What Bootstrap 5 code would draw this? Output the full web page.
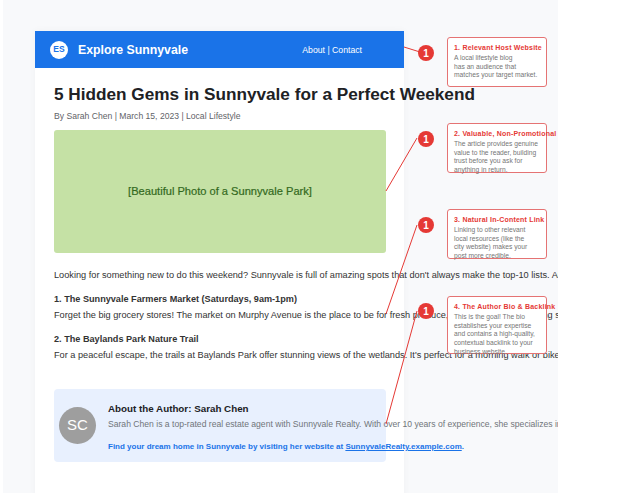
<!DOCTYPE html>
<html lang="en">
<head>
  <meta charset="UTF-8" />
  <meta name="viewport" content="width=device-width, initial-scale=1" />
  <title>Explore Sunnyvale</title>
  <link href="https://cdn.jsdelivr.net/npm/bootstrap@5.3.3/dist/css/bootstrap.min.css" rel="stylesheet" />
  <style>
    html, body {
      height: 100%;
      background-color: #fff;
    }
    body {
      overflow: hidden;
      font-family: "Liberation Sans", Arial, sans-serif;
    }
    .canvas-area {
      position: relative;
      width: 555px;
      height: 493px;
      margin-left: 3px;
      padding: 31px 0 0 32px;
      background-color: #f8f9fb;
      overflow: hidden;
    }
    .blog-page {
      width: 369px;
      min-height: 470px;
      background-color: #fff;
      box-shadow: 0 0 8px rgba(0, 0, 0, .04);
    }
    .blog-header {
      height: 37px;
      padding: 0 42px 0 15px;
      background-color: #1a73e8;
      color: #fff;
    }
    .logo-dot {
      width: 18px;
      height: 18px;
      background-color: #fff;
      color: #1a73e8;
      font-size: 8.5px;
      font-weight: 700;
    }
    .blog-name {
      margin: 1px 0 0 10px;
      font-size: 12.3px;
      font-weight: 700;
    }
    .blog-links {
      font-size: 8.7px;
      padding-top: 2px;
    }
    .blog-body {
      padding: 15px 18px 0 19px;
      width: 351px;
    }
    .post-title {
      margin: 0;
      font-size: 17.2px;
      line-height: 22px;
      font-weight: 700;
      color: #202124;
      white-space: nowrap;
    }
    .post-meta {
      margin: 5px 0 8px;
      font-size: 8.6px;
      line-height: 12px;
      color: #5f6368;
    }
    .photo-box {
      width: 332px;
      height: 123px;
      background-color: #c5e1a5;
      color: #33691e;
      font-size: 11.1px;
      border-radius: 3px;
      -webkit-text-stroke: .2px #33691e;
    }
    .post-text {
      margin: 16px 0 0;
      font-size: 9.2px;
      line-height: 12px;
      color: #333;
      white-space: nowrap;
    }
    .post-sub {
      margin: 12px 0 0;
      font-size: 9.15px;
      line-height: 12px;
      font-weight: 700;
      color: #333;
      white-space: nowrap;
    }
    .post-sub + .post-text {
      margin-top: 4px;
    }
    .author-box {
      width: 332px;
      height: 73px;
      margin-top: 28px;
      padding-left: 5px;
      background-color: #e8f0fe;
      border-radius: 4px;
      white-space: nowrap;
    }
    .author-pic {
      width: 37px;
      height: 37px;
      margin-right: 12px;
      background-color: #9e9e9e;
      color: #fff;
      font-size: 15px;
    }
    .author-text {
      margin-top: 4px;
    }
    .author-name {
      font-size: 9.8px;
      line-height: 12px;
      font-weight: 700;
      color: #202124;
    }
    .author-bio {
      margin-top: 4px;
      font-size: 8.6px;
      line-height: 11px;
      color: #70757a;
    }
    .author-link {
      margin-top: 11px;
      font-size: 8px;
      line-height: 11px;
      font-weight: 700;
      color: #1a73e8;
    }
    .author-link a {
      color: #1a73e8;
    }
    .mark-layer {
      position: absolute;
      left: -3px;
      top: 0;
      width: 561px;
      height: 493px;
    }
    .mark-num {
      fill: #fff;
      font-size: 10px;
      font-weight: 700;
      font-family: "Liberation Sans", Arial, sans-serif;
    }
    .note-box {
      position: absolute;
      left: 444px;
      width: 100px;
      padding: 6px 6px 0;
      background-color: #fff;
      border: 1px solid #e57373;
      border-radius: 3px;
      font-size: 6.7px;
      line-height: 8.8px;
      color: #757575;
    }
    .note-box strong {
      display: block;
      margin-bottom: 1px;
      font-size: 7px;
      color: #e53935;
      white-space: nowrap;
      letter-spacing: .2px;
    }
    .note-one { top: 37px; height: 50px; }
    .note-two { top: 123px; height: 50px; }
    .note-three { top: 209px; height: 50px; }
    .note-four { top: 296px; height: 58px; }
  </style>
</head>
<body>
  <div class="canvas-area">
    <div class="blog-page">
      <div class="blog-header d-flex align-items-center">
        <span class="logo-dot rounded-circle d-flex align-items-center justify-content-center">ES</span>
        <span class="blog-name">Explore Sunnyvale</span>
        <span class="blog-links ms-auto">About | Contact</span>
      </div>
      <div class="blog-body">
        <h1 class="post-title">5 Hidden Gems in Sunnyvale for a Perfect Weekend</h1>
        <p class="post-meta">By Sarah Chen | March 15, 2023 | Local Lifestyle</p>
        <div class="photo-box d-flex align-items-center justify-content-center">[Beautiful Photo of a Sunnyvale Park]</div>
        <p class="post-text">Looking for something new to do this weekend? Sunnyvale is full of amazing spots that don't always make the top-10 lists. And they are all close to home for you.</p>
        <p class="post-sub">1. The Sunnyvale Farmers Market (Saturdays, 9am-1pm)</p>
        <p class="post-text">Forget the big grocery stores! The market on Murphy Avenue is the place to be for fresh produce, local honey and amazing street food every single morning.</p>
        <p class="post-sub">2. The Baylands Park Nature Trail</p>
        <p class="post-text">For a peaceful escape, the trails at Baylands Park offer stunning views of the wetlands. It's perfect for a morning walk or bike ride with the whole family.</p>
        <div class="author-box d-flex align-items-center">
          <div class="author-pic rounded-circle flex-shrink-0 d-flex align-items-center justify-content-center">SC</div>
          <div class="author-text">
            <div class="author-name">About the Author: Sarah Chen</div>
            <div class="author-bio">Sarah Chen is a top-rated real estate agent with Sunnyvale Realty. With over 10 years of experience, she specializes in helping families.</div>
            <div class="author-link">Find your dream home in Sunnyvale by visiting her website at <a href="#">SunnyvaleRealty.example.com</a>.</div>
          </div>
        </div>
      </div>
    </div>

    <svg class="mark-layer" viewBox="0 0 561 493" aria-hidden="true">
      <g stroke="#e53935" stroke-width="1" fill="none">
        <line x1="404" y1="47" x2="420" y2="52" />
        <line x1="386" y1="191" x2="417" y2="138" />
        <line x1="386" y1="314" x2="417" y2="225" />
        <line x1="386" y1="424" x2="417" y2="311" />
      </g>
      <g fill="#e53935">
        <circle cx="426" cy="53" r="8" />
        <circle cx="426" cy="139" r="8" />
        <circle cx="426" cy="225" r="8" />
        <circle cx="426" cy="311" r="8" />
      </g>
      <text class="mark-num" x="426" y="57" text-anchor="middle">1</text>
      <text class="mark-num" x="426" y="143" text-anchor="middle">1</text>
      <text class="mark-num" x="426" y="229" text-anchor="middle">1</text>
      <text class="mark-num" x="426" y="315" text-anchor="middle">1</text>
    </svg>

    <div class="note-box note-one"><strong>1. Relevant Host Website</strong>A local lifestyle blog<br />has an audience that<br />matches your target market.</div>
    <div class="note-box note-two"><strong>2. Valuable, Non-Promotional Content</strong>The article provides genuine<br />value to the reader, building<br />trust before you ask for<br />anything in return.</div>
    <div class="note-box note-three"><strong>3. Natural In-Content Link</strong>Linking to other relevant<br />local resources (like the<br />city website) makes your<br />post more credible.</div>
    <div class="note-box note-four"><strong>4. The Author Bio &amp; Backlink</strong>This is the goal! The bio<br />establishes your expertise<br />and contains a high-quality,<br />contextual backlink to your<br />business website.</div>
  </div>
  <script src="https://cdn.jsdelivr.net/npm/bootstrap@5.3.3/dist/js/bootstrap.bundle.min.js"></script>
</body>
</html>
